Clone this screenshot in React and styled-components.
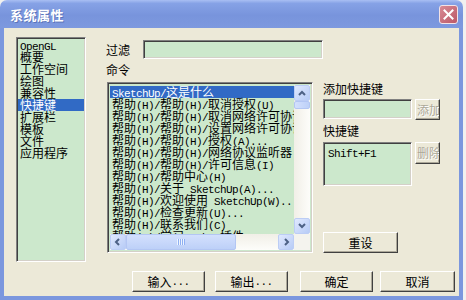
import styled, { createGlobalStyle, css } from "styled-components";

const GlobalStyle = createGlobalStyle`
  html, body {
    margin: 0;
    padding: 0;
    background: #f1f1ef;
  }
  body {
    font-family: "Noto Sans CJK SC", sans-serif;
    font-size: 12px;
    color: #000;
  }
`;

// half-width text is drawn in a narrow mono face, like the SimSun latin glyphs
const Latin = styled.span`
  font-family: "Liberation Mono", monospace;
  font-size: 11px;
  letter-spacing: -0.6px;
`;

const mixed = (text) =>
  text
    .split(/([\x00-\x7F]+)/)
    .filter(Boolean)
    .map((part, i) =>
      /^[\x00-\x7F]+$/.test(part) ? <Latin key={i}>{part}</Latin> : part
    );

const sunken = css`
  box-sizing: border-box;
  border: 1px solid;
  border-color: #808080 #ffffff #ffffff #808080;
  box-shadow: inset 1px 1px 0 #404040, inset -1px -1px 0 #d4d0c8;
  background: #cce8cc;
`;

const Window = styled.div`
  width: 463px;
  height: 300px;
  display: flex;
  flex-direction: column;
`;

const TitleBar = styled.div`
  flex: none;
  height: 28px;
  box-sizing: border-box;
  display: flex;
  align-items: center;
  justify-content: space-between;
  padding: 0 5px 0 10px;
  border-radius: 7px 7px 0 0;
  background: linear-gradient(
    to bottom,
    #a9bff3 0%,
    #86a2e6 12%,
    #7894dc 55%,
    #7d99df 100%
  );
`;

const Title = styled.span`
  color: #fff;
  font-weight: bold;
  font-size: 13px;
  letter-spacing: 0.5px;
  text-shadow: 1px 1px 0 #5b74b9;
`;

const CloseButton = styled.div`
  width: 19px;
  height: 19px;
  box-sizing: border-box;
  border: 1px solid #f3e3e6;
  border-radius: 3px;
  background: linear-gradient(135deg, #d88b95, #bb5867);
  display: flex;
  align-items: center;
  justify-content: center;
`;

const Body = styled.div`
  flex: 1;
  box-sizing: border-box;
  display: flex;
  flex-direction: column;
  padding: 9px 0 0 12px;
  background: #ece9d8;
  border: 4px solid #7b97de;
  border-top: none;
`;

const Main = styled.div`
  display: flex;
  height: 225px;
`;

const CategoryList = styled.div`
  ${sunken};
  width: 70px;
  height: 225px;
  padding: 1px 1px;
`;

const Item = styled.div`
  height: 12px;
  line-height: 12px;
  padding-left: 2px;
  white-space: nowrap;
  background: ${(p) => (p.$selected ? "#316ac5" : "transparent")};
  color: ${(p) => (p.$selected ? "#fff" : "#000")};
`;

const RightPane = styled.div`
  flex: 1;
  margin-left: 20px;
  display: flex;
  flex-direction: column;
`;

const FilterRow = styled.div`
  display: flex;
  align-items: center;
  height: 19px;
  margin-top: 3px;
`;

const Label = styled.div`
  line-height: 12px;
  height: 12px;
  white-space: nowrap;
  width: ${(p) => p.$w || "auto"};
  margin-top: ${(p) => p.$mt || 0};
`;

const FilterInput = styled.div`
  ${sunken};
  width: 180px;
  height: 19px;
`;

const CommandRow = styled.div`
  display: flex;
  gap: 10px;
  margin: 6px 0 0 1px;
  height: 171px;
`;

const CommandList = styled.div`
  ${sunken};
  width: 206px;
  height: 171px;
  padding: 2px;
  display: grid;
  grid-template-columns: 1fr 16px;
  grid-template-rows: 1fr 16px;
`;

const Rows = styled.div`
  overflow: hidden;
  padding-top: 1px;
`;

const VScroll = styled.div`
  display: flex;
  flex-direction: column;
  background: linear-gradient(to right, #f1efe7, #fdfdfa);
`;

const HScroll = styled.div`
  display: flex;
  background: linear-gradient(to bottom, #f1efe7, #fdfdfa);
`;

const Corner = styled.div`
  background: #f4f3ee;
`;

const ArrowButton = styled.div`
  flex: none;
  width: 16px;
  height: 16px;
  box-sizing: border-box;
  border: 1px solid #bccdf5;
  border-radius: 2px;
  background: linear-gradient(135deg, #e0e9fe, #b7cbf6);
  display: flex;
  align-items: center;
  justify-content: center;
`;

const Thumb = styled.div`
  flex: none;
  box-sizing: border-box;
  width: ${(p) => (p.$vertical ? "16px" : `${p.$size}px`)};
  height: ${(p) => (p.$vertical ? `${p.$size}px` : "16px")};
  border: 1px solid #b3c6f3;
  border-radius: 2px;
  background: ${(p) =>
    p.$vertical
      ? "linear-gradient(to right, #d3e0fd, #bdd0f8)"
      : "linear-gradient(to bottom, #d3e0fd, #bdd0f8)"};
  display: flex;
  align-items: center;
  justify-content: center;
`;

const Grip = styled.div`
  width: 8px;
  height: 6px;
  background: repeating-linear-gradient(
    to right,
    #eef4fe 0 1px,
    #8fb0f2 1px 2px
  );
`;

const Spacer = styled.div`
  flex: 1;
`;

const ShortcutCol = styled.div`
  width: 117px;
  display: flex;
  flex-direction: column;
`;

const FieldRow = styled.div`
  display: flex;
  align-items: flex-start;
  gap: 3px;
  margin-top: ${(p) => p.$mt || 0};
`;

const KeyInput = styled.div`
  ${sunken};
  width: 89px;
  height: ${(p) => p.$h || "20px"};
  padding: 3px 4px;
  line-height: 12px;
`;

const Button = styled.div`
  box-sizing: border-box;
  flex: none;
  width: ${(p) => p.$w || "73px"};
  height: ${(p) => p.$h || "21px"};
  margin-top: ${(p) => (p.$push ? "auto" : 0)};
  border: 1px solid;
  border-color: #ffffff #404040 #404040 #ffffff;
  box-shadow: inset -1px -1px 0 #aca899;
  background: #ece9d8;
  display: flex;
  align-items: center;
  justify-content: ${(p) => (p.$tight ? "flex-start" : "center")};
  padding-left: ${(p) => (p.$tight ? "1px" : 0)};
  white-space: nowrap;
  overflow: hidden;
  line-height: 12px;
  color: ${(p) => (p.$disabled ? "#aca899" : "#000")};
  text-shadow: ${(p) => (p.$disabled ? "1px 1px 0 #fff" : "none")};
`;

const Footer = styled.div`
  display: flex;
  margin-top: 9px;
  padding-left: 116px;
`;

const ButtonGroup = styled.div`
  display: flex;
  gap: ${(p) => p.$gap};
  margin-left: ${(p) => p.$ml || 0};
`;

const Chevron = ({ dir }) => {
  const pts = {
    up: "1,6 4,3 7,6",
    down: "1,2 4,5 7,2",
    left: "5,1 2,4 5,7",
    right: "3,1 6,4 3,7",
  }[dir];
  return (
    <svg width="8" height="8" viewBox="0 0 8 8">
      <polyline points={pts} fill="none" stroke="#4d6185" strokeWidth="2" />
    </svg>
  );
};

const categories = [
  "OpenGL",
  "概要",
  "工作空间",
  "绘图",
  "兼容性",
  "快捷键",
  "扩展栏",
  "模板",
  "文件",
  "应用程序",
];

const commands = [
  "SketchUp/这是什么",
  "帮助(H)/帮助(H)/取消授权(U)",
  "帮助(H)/帮助(H)/取消网络许可协议",
  "帮助(H)/帮助(H)/设置网络许可协议",
  "帮助(H)/帮助(H)/授权(A)...",
  "帮助(H)/帮助(H)/网络协议监听器",
  "帮助(H)/帮助(H)/许可信息(I)",
  "帮助(H)/帮助中心(H)",
  "帮助(H)/关于 SketchUp(A)...",
  "帮助(H)/欢迎使用 SketchUp(W)...",
  "帮助(H)/检查更新(U)...",
  "帮助(H)/联系我们(C)",
  "帮助(H)/学习 Ruby 插件",
];

export default function App() {
  return (
    <>
      <GlobalStyle />
      <Window>
        <TitleBar>
          <Title>系统属性</Title>
          <CloseButton>
            <svg width="11" height="11" viewBox="0 0 11 11">
              <path
                d="M1.5 1.5 L9.5 9.5 M9.5 1.5 L1.5 9.5"
                stroke="#fff"
                strokeWidth="2"
                strokeLinecap="square"
              />
            </svg>
          </CloseButton>
        </TitleBar>
        <Body>
          <Main>
            <CategoryList>
              {categories.map((c) => (
                <Item key={c} $selected={c === "快捷键"}>
                  {mixed(c)}
                </Item>
              ))}
            </CategoryList>
            <RightPane>
              <FilterRow>
                <Label $w="37px">过滤</Label>
                <FilterInput />
              </FilterRow>
              <Label $mt="5px">命令</Label>
              <CommandRow>
                <CommandList>
                  <Rows>
                    {commands.map((c, i) => (
                      <Item key={c} $selected={i === 0}>
                        {mixed(c)}
                      </Item>
                    ))}
                  </Rows>
                  <VScroll>
                    <ArrowButton>
                      <Chevron dir="up" />
                    </ArrowButton>
                    <Thumb $vertical $size={8} />
                    <Spacer />
                    <ArrowButton>
                      <Chevron dir="down" />
                    </ArrowButton>
                  </VScroll>
                  <HScroll>
                    <ArrowButton>
                      <Chevron dir="left" />
                    </ArrowButton>
                    <Thumb $size={110}>
                      <Grip />
                    </Thumb>
                    <Spacer />
                    <ArrowButton>
                      <Chevron dir="right" />
                    </ArrowButton>
                  </HScroll>
                  <Corner />
                </CommandList>
                <ShortcutCol>
                  <Label $mt="1px">添加快捷键</Label>
                  <FieldRow $mt="4px">
                    <KeyInput />
                    <Button $w="25px" $tight $disabled>
                      添加
                    </Button>
                  </FieldRow>
                  <Label $mt="5px">快捷键</Label>
                  <FieldRow $mt="5px">
                    <KeyInput $h="44px">{mixed("Shift+F1")}</KeyInput>
                    <Button $w="25px" $h="22px" $tight $disabled>
                      删除
                    </Button>
                  </FieldRow>
                  <Button $w="75px" $push>
                    重设
                  </Button>
                </ShortcutCol>
              </CommandRow>
            </RightPane>
          </Main>
          <Footer>
            <ButtonGroup $gap="10px">
              <Button>{mixed("输入...")}</Button>
              <Button>{mixed("输出...")}</Button>
            </ButtonGroup>
            <ButtonGroup $gap="7px" $ml="12px">
              <Button>确定</Button>
              <Button $w="75px">取消</Button>
            </ButtonGroup>
          </Footer>
        </Body>
      </Window>
    </>
  );
}
